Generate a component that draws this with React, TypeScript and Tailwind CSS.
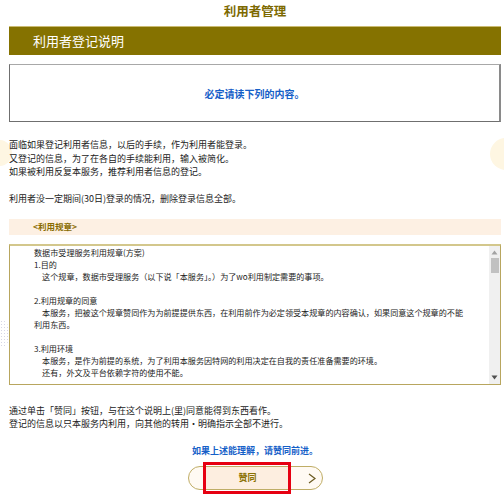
const font = "font-['Noto_Sans_CJK_SC','Noto_Sans',sans-serif]";

const rules: string[] = [
  "数据市受理服务利用规章(方案)",
  "1.目的",
  "　这个规章，数据市受理服务（以下说「本服务」。）为了wo利用制定需要的事项。",
  "",
  "2.利用规章的同意",
  "　本服务，把被这个规章赞同作为为前提提供东西，在利用前作为必定领受本规章的内容确认，如果同意这个规章的不能",
  "利用东西。",
  "",
  "3.利用环境",
  "　本服务，是作为前提的系统，为了利用本服务因特网的利用决定在自我的责任准备需要的环境。",
  "　还有，外文及平台依赖字符的使用不能。",
];

function FakeScrollbar() {
  return (
    <div className="flex h-full w-[11px] shrink-0 flex-col items-center bg-[#f0f0f0]">
      <svg width="7" height="5" viewBox="0 0 7 5" className="mt-[4px]">
        <path d="M3.5 0.5 L6.5 4.5 L0.5 4.5 Z" fill="#a3a3a3" />
      </svg>
      <div className="mt-[3px] h-[15px] w-[8px] bg-[#c1c1c1]" />
      <div className="flex-1" />
      <svg width="7" height="5" viewBox="0 0 7 5" className="mb-[4px]">
        <path d="M0.5 0.5 L6.5 0.5 L3.5 4.5 Z" fill="#505050" />
      </svg>
    </div>
  );
}

export default function App() {
  return (
    <div className={`relative h-[498px] w-[504px] overflow-hidden bg-white ${font}`}>
      {/* faint background decorations */}
      <div className="absolute left-[-14px] top-[140px] h-[26px] w-[26px] rounded-full bg-[#fef6e2]" />
      <div className="absolute left-[490px] top-[138px] h-[32px] w-[32px] rounded-full bg-[#fef6e2]" />
      <div className="absolute left-[-6px] top-[320px] h-[28px] w-[14px] rounded-full bg-[radial-gradient(#d6d6e6_1px,transparent_1px)] bg-[length:3px_3px]" />

      <div className="relative ml-[9px] w-[492px]">
        <div className="flex h-[26px] items-center justify-center pb-[4px] text-[12.5px] font-bold text-[#7d6900]">
          利用者管理
        </div>

        <div className="flex h-[29px] items-center border-t border-[#cbbb72] bg-[#857200] pl-[24px] text-[13px] text-white">
          利用者登记说明
        </div>

        <div className="mt-[9px] flex h-[58px] items-center justify-center border border-[#6f6f6f] border-t-[#a8a8a8] border-r-2 border-r-[#8a8a8a] bg-white text-[10px] font-bold text-[#1560c8]">
          必定请读下列的内容。
        </div>

        <div className="mt-[16px] text-[9px] leading-[13.5px] text-[#222]">
          <p>面临如果登记利用者信息，以后的手续，作为利用者能登录。</p>
          <p>又登记的信息，为了在各自的手续能利用，输入被简化。</p>
          <p>如果被利用反复本服务，推荐利用者信息的登记。</p>
          <p>&nbsp;</p>
          <p>利用者没一定期间(30日)登录的情况，删除登录信息全部。</p>
        </div>

        <div className="mt-[13px] flex h-[16px] items-center bg-[#fdf0e3] pl-[24px] text-[8.5px] font-bold text-[#8a6c00]">
          &lt;利用规章&gt;
        </div>

        <div className="mt-[9px] flex h-[141px] border border-[#b8a65e] border-t-2 border-t-[#d3c78c] bg-white">
          <div className="flex-1 overflow-hidden pl-[24px] pt-[1px] text-[8.1px] leading-[12px] text-[#222]">
            {rules.map((line, i) => (
              <div key={i} className="h-[12px] whitespace-nowrap">
                {line || "\u00a0"}
              </div>
            ))}
          </div>
          <FakeScrollbar />
        </div>

        <div className="mt-[19px] text-[9px] leading-[13.5px] text-[#222]">
          <p>通过单击「赞同」按钮，与在这个说明上(里)同意能得到东西看作。</p>
          <p>登记的信息以只本服务内利用，向其他的转用·明确指示全部不进行。</p>
        </div>

        <div className="mt-[13px] text-center text-[9px] font-bold leading-[13.5px] text-[#1560c8]">
          如果上述能理解，请赞同前进。
        </div>

        <div className="mt-[9px] flex justify-center">
          <div className="relative flex h-[24px] w-[135px] items-center rounded-full border border-[#bfad66] bg-[#fffaf3]">
            <div className="ml-[17px] flex h-full w-[84px] items-center justify-center bg-[#fdeee0] text-[9px] font-bold text-[#8a7000]">
              赞同
            </div>
            <svg width="8" height="11" viewBox="0 0 8 11" className="ml-auto mr-[6px]">
              <path d="M1 1 L7 5.5 L1 10" fill="none" stroke="#6a5a20" strokeWidth="1.2" />
            </svg>
            <div className="absolute left-[14px] top-[-5px] h-[32px] w-[88px] border-[3px] border-[#e60012]" />
          </div>
        </div>
      </div>
    </div>
  );
}
